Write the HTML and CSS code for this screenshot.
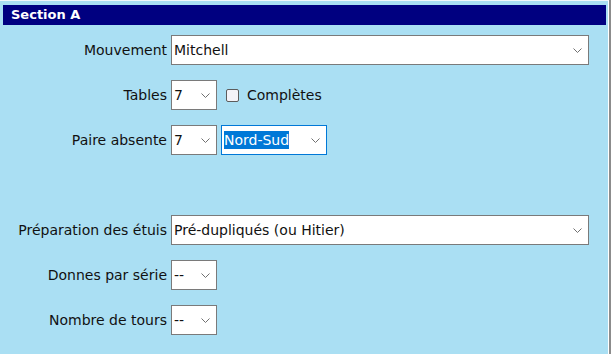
FILE: index.html
```html
<!DOCTYPE html>
<html>

<head>
	<title>Section A</title>
	<meta charset="utf-8">
	<link rel="stylesheet" href="styles.css">
</head>

<body>
	<div class="panel">
		<div class="titre">Section A</div>
		<div class="form">
			<div class="ligne">
				<label>Mouvement</label>
				<span class="combo large"><span class="val">Mitchell</span>
					<svg class="fleche" width="9" height="5" viewBox="0 0 9 5"><path d="M0.5 0.5 L4.5 4.5 L8.5 0.5" fill="none" stroke="#707070" stroke-width="1"/></svg>
				</span>
			</div>
			<div class="ligne">
				<label>Tables</label>
				<span class="combo petit"><span class="val">7</span>
					<svg class="fleche" width="9" height="5" viewBox="0 0 9 5"><path d="M0.5 0.5 L4.5 4.5 L8.5 0.5" fill="none" stroke="#707070" stroke-width="1"/></svg>
				</span>
				<span class="case"><input type="checkbox"> Complètes</span>
			</div>
			<div class="ligne">
				<label>Paire absente</label>
				<span class="combo petit"><span class="val">7</span>
					<svg class="fleche" width="9" height="5" viewBox="0 0 9 5"><path d="M0.5 0.5 L4.5 4.5 L8.5 0.5" fill="none" stroke="#707070" stroke-width="1"/></svg>
				</span>
				<span class="combo moyen actif"><span class="val choisi">Nord-Sud</span>
					<svg class="fleche" width="9" height="5" viewBox="0 0 9 5"><path d="M0.5 0.5 L4.5 4.5 L8.5 0.5" fill="none" stroke="#707070" stroke-width="1"/></svg>
				</span>
			</div>
			<div class="ligne vide"></div>
			<div class="ligne">
				<label>Préparation des étuis</label>
				<span class="combo large"><span class="val">Pré-dupliqués (ou Hitier)</span>
					<svg class="fleche" width="9" height="5" viewBox="0 0 9 5"><path d="M0.5 0.5 L4.5 4.5 L8.5 0.5" fill="none" stroke="#707070" stroke-width="1"/></svg>
				</span>
			</div>
			<div class="ligne">
				<label>Donnes par série</label>
				<span class="combo petit"><span class="val">--</span>
					<svg class="fleche" width="9" height="5" viewBox="0 0 9 5"><path d="M0.5 0.5 L4.5 4.5 L8.5 0.5" fill="none" stroke="#707070" stroke-width="1"/></svg>
				</span>
			</div>
			<div class="ligne">
				<label>Nombre de tours</label>
				<span class="combo petit"><span class="val">--</span>
					<svg class="fleche" width="9" height="5" viewBox="0 0 9 5"><path d="M0.5 0.5 L4.5 4.5 L8.5 0.5" fill="none" stroke="#707070" stroke-width="1"/></svg>
				</span>
			</div>
		</div>
	</div>
</body>

</html>
```

FILE: styles.css
```css
* {
	margin: 0;
	box-sizing: border-box;
}

body {
	background-color: #8c8c8c;
	font-family: "DejaVu Sans", Verdana, sans-serif;
	font-size: 14px;
	color: #111;
	overflow: hidden;
}

.panel {
	width: 609px;
	height: 354px;
	background-color: #aadff3;
	border-top: 1px solid #f2f8fb;
	border-right: 1px solid #ffffff;
	padding: 4px 2px 0 3px;
}

.titre {
	background-color: #000080;
	color: #ffffff;
	font-size: 13px;
	font-weight: bold;
	height: 20px;
	line-height: 20px;
	padding-left: 8px;
}

.form {
	display: flex;
	flex-direction: column;
	gap: 15px;
	padding-top: 10px;
}

.ligne {
	display: flex;
	align-items: center;
	height: 30px;
}

.vide {
	height: 30px;
}

.ligne label {
	width: 168px;
	text-align: right;
	padding-right: 4px;
	white-space: nowrap;
}

.combo {
	position: relative;
	display: flex;
	align-items: center;
	height: 30px;
	background-color: #ffffff;
	border: 1px solid #7a7a7a;
	padding-left: 2px;
}

.large {
	width: 418px;
}

.petit {
	width: 46px;
}

.moyen {
	width: 106px;
	margin-left: 4px;
}

.actif {
	border-color: #0078d7;
}

.choisi {
	background-color: #0078d7;
	color: #ffffff;
	padding: 1px 0;
}

.fleche {
	position: absolute;
	right: 6px;
	top: 12px;
}

.case {
	display: flex;
	align-items: center;
	margin-left: 9px;
}

.case input {
	appearance: none;
	width: 13px;
	height: 13px;
	border: 1px solid #5c5c5c;
	border-radius: 2px;
	background-color: #f3f3f8;
	margin: 0 8px 0 0;
}
```
